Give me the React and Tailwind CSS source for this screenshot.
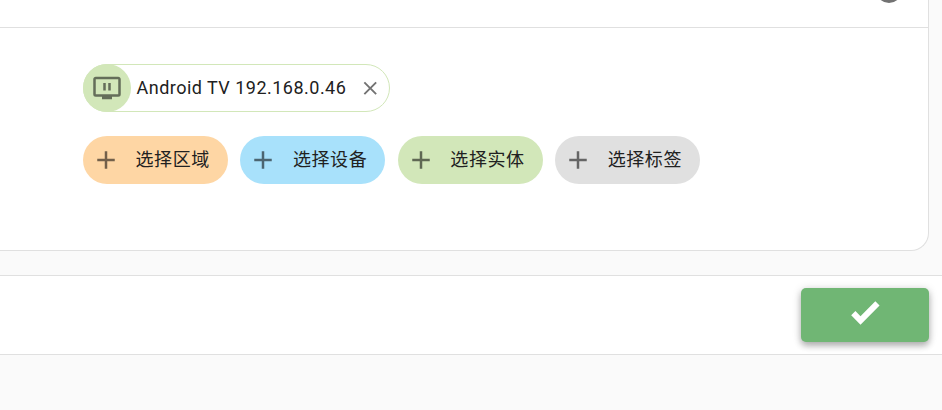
import clsx from 'clsx';

const icons = {
  plus: 'M19 13H13V19H11V13H5V11H11V5H13V11H19V13Z',
  close: 'M19 6.41L17.59 5L12 10.59L6.41 5L5 6.41L10.59 12L5 17.59L6.41 19L12 13.41L17.59 19L19 17.59L13.41 12L19 6.41Z',
  check: 'M9 20.42L2.79 14.21L5.62 11.38L9 14.77L18.88 4.88L21.71 7.71L9 20.42Z',
  tvPause:
    'M21 3H3C1.89 3 1 3.89 1 5V17A2 2 0 0 0 3 19H8V21H16V19H21A2 2 0 0 0 23 17V5C23 3.89 22.1 3 21 3M21 17H3V5H21V17M11 8H9V14H11V8M15 8H13V14H15V8Z',
};

function Icon({ name, className }) {
  return (
    <svg viewBox="0 0 24 24" className={clsx('shrink-0 fill-current', className)}>
      <path d={icons[name]} />
    </svg>
  );
}

const pickers = [
  { label: '选择区域', color: 'bg-[#fed6a4]' },
  { label: '选择设备', color: 'bg-[#a8e1fb]' },
  { label: '选择实体', color: 'bg-[#d2e7b9]' },
  { label: '选择标签', color: 'bg-[#e0e0e0]' },
];

function App() {
  return (
    <div className="h-[410px] overflow-hidden bg-[#fafafa] font-[Roboto,'Noto_Sans_CJK_SC',sans-serif] text-[18px] text-[#212121]">
      {/* Settings card */}
      <div className="mr-[13px] h-[251px] overflow-hidden rounded-br-[18px] border-r border-b border-[#e0e0e0] bg-white">
        <div className="flex h-7 items-end justify-end border-b border-[#e0e0e0] pr-[26px] pb-6">
          <div className="h-[26px] w-[26px] shrink-0 rounded-full bg-[#727272]" />
        </div>

        <div className="pt-9 pl-[83px]">
          {/* Selected target */}
          <div className="flex h-12 w-[307px] items-center rounded-full border border-[#d2e7b9]">
            <div className="-ml-px flex h-12 w-12 shrink-0 items-center justify-center rounded-full bg-[#d2e7b9]">
              <Icon name="tvPause" className="h-[30px] w-[30px] text-[#646e59]" />
            </div>
            <span className="ml-[5.5px] pb-0.5 whitespace-nowrap tracking-[0.48px]">Android TV 192.168.0.46</span>
            <button className="mr-[7.5px] ml-auto text-[#727272]">
              <Icon name="close" className="h-[22.5px] w-[22.5px]" />
            </button>
          </div>

          {/* Add target buttons */}
          <div className="mt-6 flex gap-[12.4px]">
            {pickers.map((picker) => (
              <button
                key={picker.label}
                className={clsx('flex h-12 w-[145px] items-center rounded-full pl-2', picker.color)}
              >
                <Icon name="plus" className="h-[30px] w-[30px] text-black/55" />
                <span className="ml-[14.5px] pb-0.5 whitespace-nowrap tracking-[0.6px]">{picker.label}</span>
              </button>
            ))}
          </div>
        </div>
      </div>

      {/* Footer actions */}
      <div className="mt-6 flex h-20 justify-end border-y border-[#e0e0e0] bg-white pt-3 pr-[13px]">
        <button className="flex h-[54px] w-32 items-center justify-center rounded-[5px] bg-[#70b674] pb-1.5 text-white shadow-[0_4px_6px_rgba(0,0,0,0.24),0_1px_10px_rgba(0,0,0,0.16)]">
          <Icon name="check" className="h-9 w-9" />
        </button>
      </div>
    </div>
  );
}

export default App;
